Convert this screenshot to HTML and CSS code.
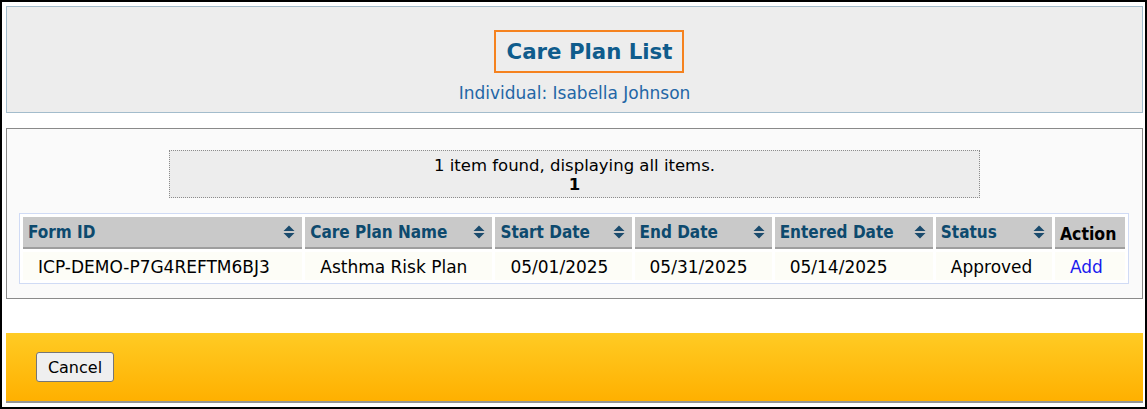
FILE: index.html
```html
<!DOCTYPE html>
<html>
<head>
<meta charset="utf-8">
<link rel="stylesheet" href="styles.css">
</head>
<body>
<div class="frame">
  <div class="head-panel">
    <h1 class="title">Care Plan List</h1>
    <div class="individual">Individual: Isabella Johnson</div>
  </div>
  <div class="list-panel">
    <div class="pager">
      <div>1 item found, displaying all items.</div>
      <div class="page-num">1</div>
    </div>
    <table class="grid">
      <colgroup>
        <col style="width:279px"><col style="width:187px"><col style="width:136px"><col style="width:137px"><col style="width:158px"><col style="width:116px"><col style="width:70px">
      </colgroup>
      <thead>
        <tr>
          <th><span class="th-in"><span>Form ID</span><svg class="sort" viewBox="0 0 12 14"><path d="M6 0.5 L11.5 6 H0.5 Z M0.5 8 H11.5 L6 13.5 Z"/></svg></span></th>
          <th><span class="th-in"><span>Care Plan Name</span><svg class="sort" viewBox="0 0 12 14"><path d="M6 0.5 L11.5 6 H0.5 Z M0.5 8 H11.5 L6 13.5 Z"/></svg></span></th>
          <th><span class="th-in"><span>Start Date</span><svg class="sort" viewBox="0 0 12 14"><path d="M6 0.5 L11.5 6 H0.5 Z M0.5 8 H11.5 L6 13.5 Z"/></svg></span></th>
          <th><span class="th-in"><span>End Date</span><svg class="sort" viewBox="0 0 12 14"><path d="M6 0.5 L11.5 6 H0.5 Z M0.5 8 H11.5 L6 13.5 Z"/></svg></span></th>
          <th><span class="th-in"><span>Entered Date</span><svg class="sort" viewBox="0 0 12 14"><path d="M6 0.5 L11.5 6 H0.5 Z M0.5 8 H11.5 L6 13.5 Z"/></svg></span></th>
          <th><span class="th-in"><span>Status</span><svg class="sort" viewBox="0 0 12 14"><path d="M6 0.5 L11.5 6 H0.5 Z M0.5 8 H11.5 L6 13.5 Z"/></svg></span></th>
          <th class="th-action">Action</th>
        </tr>
      </thead>
      <tbody>
        <tr>
          <td>ICP-DEMO-P7G4REFTM6BJ3</td>
          <td>Asthma Risk Plan</td>
          <td>05/01/2025</td>
          <td>05/31/2025</td>
          <td>05/14/2025</td>
          <td>Approved</td>
          <td><a class="add" href="#">Add</a></td>
        </tr>
      </tbody>
    </table>
  </div>
  <div class="footer">
    <button class="btn" type="button">Cancel</button>
  </div>
</div>
</body>
</html>
```
FILE: styles.css
```css
html, body {
  margin: 0;
  padding: 0;
  background: #fff;
}
body {
  font-family: "DejaVu Sans", "Liberation Sans", sans-serif;
}
.frame {
  box-sizing: border-box;
  width: 1147px;
  height: 409px;
  border: 2px solid #000;
  padding: 4px 2px 0 4px;
}
.head-panel {
  box-sizing: border-box;
  height: 107px;
  background: #ededed;
  border: 1px solid #a3bccc;
  padding-top: 23px;
  display: flex;
  flex-direction: column;
  align-items: center;
}
.title {
  margin: 0 0 0 29px;
  border: 2px solid #f5821f;
  padding: 6px 10px 6px 11px;
  font-size: 21.3px;
  line-height: 27px;
  font-weight: bold;
  color: #0f5c8c;
}
.individual {
  margin-top: 10px;
  font-size: 17px;
  line-height: 20px;
  color: #2366a6;
}
.list-panel {
  box-sizing: border-box;
  height: 171px;
  margin-top: 15px;
  background: #fafafa;
  border: 1px solid #8a8a8a;
  padding: 21px 0 0 12px;
}
.pager {
  box-sizing: border-box;
  width: 811px;
  height: 48px;
  margin: 0 0 0 150px;
  background: #ededed;
  border: 1px dotted #8c8c8c;
  padding-top: 5px;
  text-align: center;
  font-size: 16.5px;
  line-height: 19px;
  color: #000;
}
.page-num {
  font-weight: bold;
}
.grid {
  margin-top: 15px;
  width: 1110px;
  table-layout: fixed;
  border: 1px solid #d0dbf5;
  border-spacing: 3px;
  background: #fff;
}
.grid th {
  box-sizing: border-box;
  height: 32px;
  padding: 0 7px 0 5px;
  background: #c9c9c9;
  border-bottom: 2px solid #9e9e9e;
  text-align: left;
  font-family: "DejaVu Sans Condensed", "DejaVu Sans", sans-serif;
  font-size: 17px;
  font-weight: bold;
  color: #0d4a6e;
}
.th-in {
  display: flex;
  align-items: center;
  justify-content: space-between;
}
.sort {
  width: 12px;
  height: 14px;
  fill: #1b4b6d;
  flex: none;
}
.grid th.th-action {
  color: #000;
  font-size: 17.5px;
  padding-top: 3px;
}
.grid td {
  height: 27px;
  padding: 1px 0 0 15px;
  background: #fdfdf7;
  font-size: 17px;
  color: #000;
  text-align: left;
}
.add {
  color: #1a1aee;
  text-decoration: none;
}
.footer {
  box-sizing: border-box;
  height: 70px;
  margin-top: 34px;
  background: linear-gradient(to bottom, #ffcb24, #ffb000);
  border-bottom: 2px solid #959595;
  padding: 19px 0 0 30px;
}
.btn {
  box-sizing: border-box;
  width: 78px;
  height: 30px;
  background: #efefef;
  border: 1px solid #767676;
  border-radius: 3px;
  font-family: "DejaVu Sans", "Liberation Sans", sans-serif;
  font-size: 16px;
  color: #000;
  padding: 0;
}
```
